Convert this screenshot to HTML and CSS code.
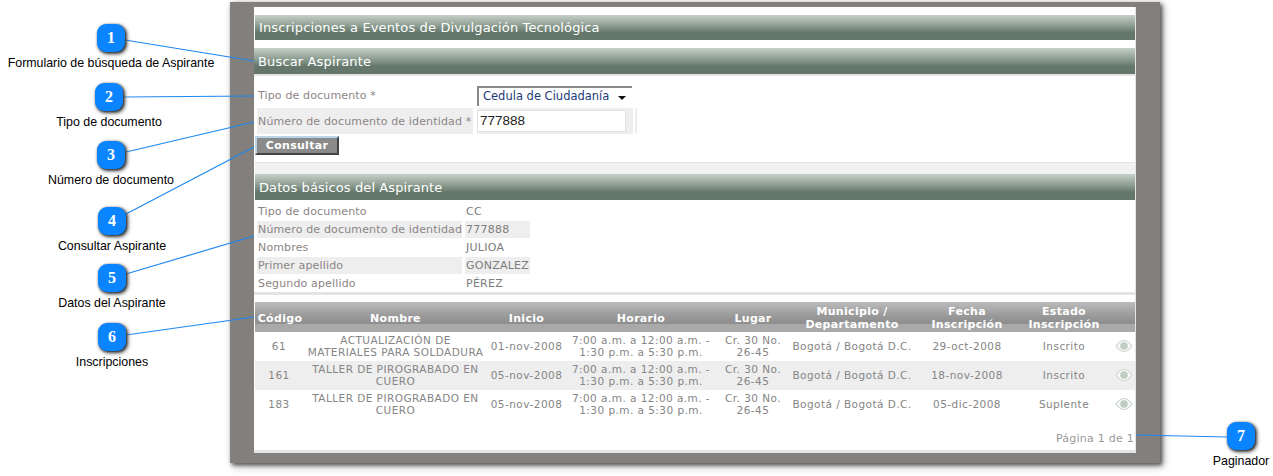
FILE: index.html
```html
<!DOCTYPE html>
<html lang="es">
<head>
<meta charset="utf-8">
<title>Inscripciones</title>
<link rel="stylesheet" href="styles.css">
</head>
<body>
<div class="canvas">
  <main class="panel">
    <div class="sheet">
      <h1 class="bar bar-title">Inscripciones a Eventos de Divulgación Tecnológica</h1>
      <h2 class="bar bar-search">Buscar Aspirante</h2>
      <div class="rule-top"></div>
      <form class="form">
        <div class="form-row">
          <span class="form-label">Tipo de documento *</span>
          <span class="select">Cedula de Ciudadanía<i class="caret"></i></span>
        </div>
        <div class="form-row form-row-alt">
          <span class="form-label form-label-alt">Número de documento de identidad *</span>
          <span class="input-cell"><span class="input">777888</span></span>
          <span class="sliver"></span>
        </div>
        <span class="button">Consultar</span>
      </form>
      <div class="divider"></div>
      <h2 class="bar bar-data">Datos básicos del Aspirante</h2>
      <dl class="data">
        <div class="data-row"><dt>Tipo de documento</dt><dd>CC</dd></div>
        <div class="data-row alt"><dt>Número de documento de identidad</dt><dd>777888</dd></div>
        <div class="data-row"><dt>Nombres</dt><dd>JULIOA</dd></div>
        <div class="data-row alt"><dt>Primer apellido</dt><dd>GONZALEZ</dd></div>
        <div class="data-row"><dt>Segundo apellido</dt><dd>PÉREZ</dd></div>
      </dl>
      <div class="rule-mid"></div>
      <table class="grid">
        <colgroup>
          <col class="c1"><col class="c2"><col class="c3"><col class="c4"><col class="c5"><col class="c6"><col class="c7"><col class="c8"><col class="c9">
        </colgroup>
        <thead>
          <tr>
            <th>Código</th><th>Nombre</th><th>Inicio</th><th>Horario</th><th>Lugar</th>
            <th>Municipio /<br>Departamento</th><th>Fecha<br>Inscripción</th><th>Estado<br>Inscripción</th><th></th>
          </tr>
        </thead>
        <tbody>
          <tr>
            <td>61</td><td>ACTUALIZACIÓN DE<br>MATERIALES PARA SOLDADURA</td><td>01-nov-2008</td>
            <td>7:00 a.m. a 12:00 a.m. -<br>1:30 p.m. a 5:30 p.m.</td><td>Cr. 30 No.<br>26-45</td>
            <td>Bogotá / Bogotá D.C.</td><td>29-oct-2008</td><td>Inscrito</td>
            <td class="eye-cell"><svg class="eye" viewBox="0 0 18 14"><path d="M1 7C4 2.5 6.500 1.500 9 1.500S14 2.500 17 7C14 11.500 11.500 12.500 9 12.500S4 11.500 1 7Z" fill="#f6f8f6" stroke="#cdd7cf" stroke-width="1.200"/><circle cx="9" cy="7" r="3.800" fill="#bfcdc2"/></svg></td>
          </tr>
          <tr class="alt">
            <td>161</td><td>TALLER DE PIROGRABADO EN<br>CUERO</td><td>05-nov-2008</td>
            <td>7:00 a.m. a 12:00 a.m. -<br>1:30 p.m. a 5:30 p.m.</td><td>Cr. 30 No.<br>26-45</td>
            <td>Bogotá / Bogotá D.C.</td><td>18-nov-2008</td><td>Inscrito</td>
            <td class="eye-cell"><svg class="eye" viewBox="0 0 18 14"><path d="M1 7C4 2.5 6.500 1.500 9 1.500S14 2.500 17 7C14 11.500 11.500 12.500 9 12.500S4 11.500 1 7Z" fill="#f6f8f6" stroke="#cdd7cf" stroke-width="1.200"/><circle cx="9" cy="7" r="3.800" fill="#bfcdc2"/></svg></td>
          </tr>
          <tr>
            <td>183</td><td>TALLER DE PIROGRABADO EN<br>CUERO</td><td>05-nov-2008</td>
            <td>7:00 a.m. a 12:00 a.m. -<br>1:30 p.m. a 5:30 p.m.</td><td>Cr. 30 No.<br>26-45</td>
            <td>Bogotá / Bogotá D.C.</td><td>05-dic-2008</td><td>Suplente</td>
            <td class="eye-cell"><svg class="eye" viewBox="0 0 18 14"><path d="M1 7C4 2.5 6.500 1.500 9 1.500S14 2.500 17 7C14 11.500 11.500 12.500 9 12.500S4 11.500 1 7Z" fill="#f6f8f6" stroke="#cdd7cf" stroke-width="1.200"/><circle cx="9" cy="7" r="3.800" fill="#bfcdc2"/></svg></td>
          </tr>
        </tbody>
      </table>
      <p class="pager">Página 1 de 1</p>
    </div>
  </main>

  <svg class="leaders" viewBox="0 0 1273 476" width="1273" height="476">
    <g stroke="#1e88f0" stroke-width="1.200" fill="none">
      <line x1="125" y1="40" x2="254" y2="61"/>
      <line x1="123" y1="97" x2="254" y2="96"/>
      <line x1="126" y1="152" x2="254" y2="122"/>
      <line x1="126" y1="214" x2="254" y2="147"/>
      <line x1="126" y1="274" x2="254" y2="236"/>
      <line x1="126" y1="335" x2="254" y2="317"/>
      <line x1="1136" y1="435" x2="1228" y2="437"/>
    </g>
  </svg>

  <div class="callout c-1"><b class="badge">1</b><span class="caption">Formulario de búsqueda de Aspirante</span></div>
  <div class="callout c-2"><b class="badge">2</b><span class="caption">Tipo de documento</span></div>
  <div class="callout c-3"><b class="badge">3</b><span class="caption">Número de documento</span></div>
  <div class="callout c-4"><b class="badge">4</b><span class="caption">Consultar Aspirante</span></div>
  <div class="callout c-5"><b class="badge">5</b><span class="caption">Datos del Aspirante</span></div>
  <div class="callout c-6"><b class="badge">6</b><span class="caption">Inscripciones</span></div>
  <div class="callout c-7"><b class="badge">7</b><span class="caption">Paginador</span></div>
</div>
</body>
</html>
```
FILE: styles.css
```css
* { box-sizing: border-box; }
html, body { margin: 0; padding: 0; background: #fff; }
.canvas { position: relative; width: 1273px; height: 476px; overflow: hidden; font-family: "DejaVu Sans", Verdana, sans-serif; font-size: 11px; color: #7d7d7d; }

.panel { position: absolute; left: 230px; top: 2px; width: 930px; height: 461px; background: #827f7c; box-shadow: 2px 2px 4px #555, 3px 3px 8px #aaa; padding: 5px 24px 10px; }
.sheet { width: 882px; height: 446px; background: #fff; padding: 8px 0 0 1px; border-right: 1px solid #e4e4e4; border-bottom: 3px solid #e4e4e4; position: relative; }

.bar { margin: 0; font-weight: normal; color: #fff; font-size: 13px; background: linear-gradient(#c6d0c8 0, #8a9a8e 45%, #65776a 70%, #65776a 100%); display: flex; align-items: center; }
.bar-title { height: 25px; padding-left: 4px; letter-spacing: .14px; }
.bar-search { height: 26px; margin-top: 8px; padding-left: 4px; margin-left: -1px; letter-spacing: .15px; }
.bar-data { height: 26px; padding-left: 4px; letter-spacing: .1px; }
.rule-top { height: 2px; background: #e4e4e4; margin-left: -1px; }

.form { display: block; padding: 10px 0 0 2px; height: 86px; position: relative; }
.form-row { display: flex; align-items: flex-start; height: 22px; }
.form-row-alt { height: 26px; }
.form-label { width: 220px; padding-left: 1px; color: #8b8585; letter-spacing: .15px; line-height: 20px; white-space: nowrap; }
.form-label-alt { background: #eeeeee; height: 26px; line-height: 27px; width: 216px; margin-right: 4px; }
.select { width: 155px; height: 20px; color: #1c3a7a; background: #fff; border-top: 2px solid #8a8a8a; border-left: 2px solid #8a8a8a; padding-left: 4px; line-height: 17px; position: relative; font-size: 11.500px; white-space: nowrap; }
.caret { position: absolute; right: 6px; top: 8px; border: 4px solid transparent; border-top-color: #111; border-bottom: 0; }
.input-cell { background: #eeeeee; width: 156px; height: 26px; display: block; padding-top: 2px; }
.input { display: block; width: 149px; height: 22px; border: 1px solid #e2e2e2; background: #fff; color: #222; font-family: "Liberation Sans", Arial, sans-serif; font-size: 13.500px; padding-left: 2px; line-height: 20px; }
.sliver { width: 2px; height: 26px; background: #eeeeee; margin-left: 2px; }
.button { display: block; width: 84px; height: 19px; margin: 2px 0 0 -2px; background: #8a8a8a; border-top: 2px solid #b9d4e8; border-left: 2px solid #b9d4e8; border-right: 2px solid #444; border-bottom: 2px solid #444; color: #fff; font-weight: bold; text-align: center; line-height: 15px; font-size: 11px; letter-spacing: .3px; }

.divider { height: 12px; background: #f0f2f2; border-top: 1px solid #e4e4e4; }

.data { margin: 2px 0 0 2px; }
.data-row { display: flex; height: 18px; align-items: center; }
.data-row dt { width: 205px; padding-left: 1px; line-height: 17px; height: 17px; margin-right: 3px; color: #8b8585; letter-spacing: .15px; white-space: nowrap; }
.data-row dd { margin: 0; width: 65px; line-height: 17px; height: 17px; padding-left: 1px; white-space: nowrap; letter-spacing: .25px; }
.data-row.alt dt, .data-row.alt dd { background: #eeeeee; }

.rule-mid { height: 3px; background: #e4e4e4; margin-left: -1px; }

.grid { border-collapse: collapse; table-layout: fixed; width: 880px; margin-top: 7px; }
.c1 { width: 48px; } .c2 { width: 185px; } .c3 { width: 77px; } .c4 { width: 152px; } .c5 { width: 72px; } .c6 { width: 126px; } .c7 { width: 104px; } .c8 { width: 90px; } .c9 { width: 26px; }
.grid th { height: 30px; padding: 2px 0 0; color: #fff; font-weight: bold; font-size: 11px; line-height: 13px; text-align: center; vertical-align: middle; background: linear-gradient(#bcbcbc 0, #9a9a9a 45%, #8e8e8e 73%, #a9a9a9 73%, #a9a9a9 100%); letter-spacing: .3px; }
.grid th:first-child { padding-left: 2px; }
.grid td { height: 29px; padding: 0 0 2px; text-align: center; vertical-align: middle; font-size: 10.500px; letter-spacing: .45px; line-height: 12px; color: #858585; white-space: nowrap; }
.grid tr.alt td { background: #eeeeee; }
.grid td.eye-cell { padding-left: 4px; }
.eye { width: 18px; height: 14px; display: block; margin: 0 auto; }

.pager { margin: 0; position: absolute; right: 1px; bottom: 5px; color: #999; font-size: 11px; letter-spacing: .25px; }

.leaders { position: absolute; left: 0; top: 0; pointer-events: none; }

.callout { position: absolute; display: flex; flex-direction: column; align-items: center; width: 240px; font-family: "Liberation Sans", Arial, sans-serif; font-size: 12.400px; color: #000; }
.badge { width: 28px; height: 28px; border-radius: 9px; background: #0a84ff; color: #fff; font: bold 16px/28px "Liberation Serif", "Times New Roman", serif; text-align: center; box-shadow: 1px 1px 3px #222, 2px 2px 4px #777; }
.caption { margin-top: 4px; white-space: nowrap; line-height: 14px; }
.c-1 { left: -9px; top: 24px; }
.c-2 { left: -11px; top: 83px; }
.c-3 { left: -9px; top: 141px; }
.c-4 { left: -8px; top: 207px; }
.c-5 { left: -8px; top: 264px; }
.c-6 { left: -8px; top: 323px; }
.c-7 { left: 1121px; top: 422px; }
```
